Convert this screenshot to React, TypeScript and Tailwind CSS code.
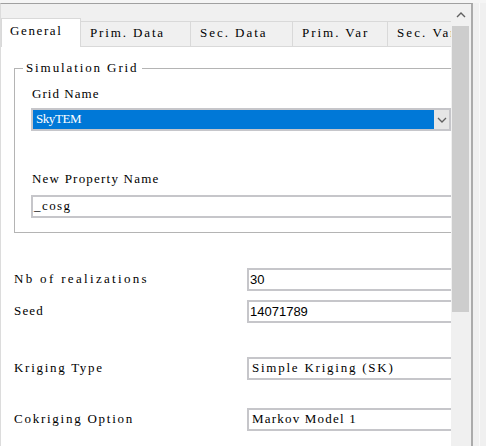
import React from "react";

let ctx: CanvasRenderingContext2D | null = null;
function spacingFor(text: string, size: number): number {
  if (typeof document === "undefined") return 0;
  if (!ctx) ctx = document.createElement("canvas").getContext("2d");
  if (!ctx) return 0;
  ctx.font = `${size}px "Liberation Serif"`;
  const w = ctx.measureText(text).width;
  return (7.5 * text.length - w) / text.length;
}

function M({ children, white }: { children: string; white?: boolean }) {
  const s = spacingFor(children, 13);
  return (
    <span
      className={`relative -top-px font-[Liberation_Serif,Times_New_Roman,serif] text-[13px] leading-[15px] whitespace-pre ${white ? "text-white" : "text-black"}`}
      style={{ letterSpacing: `${s}px` }}
    >
      {children}
    </span>
  );
}

function Tab({ label, w, selected }: { label: string; w: string; selected?: boolean }) {
  if (selected) {
    return (
      <div className={`${w} h-[29px] -mb-px bg-white border-t border-l border-r border-[#d9d9d9] flex items-center pl-[8px] pb-[4px] z-10 shrink-0`}>
        <M>{label}</M>
      </div>
    );
  }
  return (
    <div className={`${w} h-[25px] bg-[#f0f0f0] border-t border-r border-[#d9d9d9] flex items-center pl-[9px] pb-[2px] shrink-0 whitespace-nowrap`}>
      <M>{label}</M>
    </div>
  );
}

function Row({ label, value, sans, top }: { label: string; value: string; sans?: boolean; top: string }) {
  return (
    <div className={`flex items-center h-[23px] ${top}`}>
      <div className="w-[233px] shrink-0 flex">
        <M>{label}</M>
      </div>
      <div className="w-[230px] h-[23px] shrink-0 border-2 border-[#c6c6ca] bg-white flex items-center">
        {sans ? (
          <span className="pl-[1px] font-[Liberation_Sans,Arial,sans-serif] text-[13px] text-black leading-none">{value}</span>
        ) : (
          <span className="pl-[3px] flex">
            <M>{value}</M>
          </span>
        )}
      </div>
    </div>
  );
}

export default function App() {
  return (
    <div className="w-[486px] h-[446px] bg-[#f0f0f0] flex flex-col overflow-hidden">
      <div className="h-[3px] bg-[#f5f5f5] shrink-0" />
      <div className="flex flex-1 min-h-0">
        <div className="w-[473px] shrink-0 border-t border-t-[#a0a0a0] border-l border-l-[#dcdcdc] border-r-2 border-r-[#ababab] flex">
          {/* content */}
          <div className="w-[450px] shrink-0 flex flex-col overflow-hidden">
            {/* tab header */}
            <div className="h-[43px] shrink-0 bg-[#f0f0f0] border-b border-[#d9d9d9] flex items-end">
              <Tab label="General" w="w-[80px]" selected />
              <Tab label="Prim. Data" w="w-[110px]" />
              <Tab label="Sec. Data" w="w-[102px]" />
              <Tab label="Prim. Var" w="w-[95px]" />
              <Tab label="Sec. Var" w="w-[100px]" />
            </div>
            {/* pane */}
            <div className="flex-1 bg-white pl-[13px] pt-[14px]">
              <fieldset className="w-[450px] border border-[#b4b4b4]">
                <legend className="ml-[8px] px-[3px] text-[13px] leading-[15px]">
                  <M>Simulation Grid</M>
                </legend>
                <div className="pl-[16px] pt-[11px] pb-[14px]">
                  <div className="pl-[1px] flex">
                    <M>Grid Name</M>
                  </div>
                  <div className="mt-[6px] w-[420px] h-[23px] border-2 border-[#c6c6ca] bg-white flex">
                    <div className="w-[401px] h-full bg-[#0078d7] flex items-center pl-[3px]">
                      <M white>SkyTEM</M>
                    </div>
                    <div className="flex-1 bg-[#e6e6e6] flex items-center justify-center">
                      <svg width="10" height="6" viewBox="0 0 10 6">
                        <path d="M1 1 L5 5 L9 1" fill="none" stroke="#606060" strokeWidth="1.3" />
                      </svg>
                    </div>
                  </div>
                  <div className="mt-[41px] pl-[1px] flex">
                    <M>New Property Name</M>
                  </div>
                  <div className="mt-[8px] w-[430px] h-[23px] border-2 border-[#c6c6ca] bg-white flex items-center pl-[1px]">
                    <M>_cosg</M>
                  </div>
                </div>
              </fieldset>
              <Row top="mt-[35px]" label="Nb of realizations" value="30" sans />
              <Row top="mt-[9px]" label="Seed" value="14071789" sans />
              <Row top="mt-[34px]" label="Kriging Type" value="Simple Kriging (SK)" />
              <Row top="mt-[28px]" label="Cokriging Option" value="Markov Model 1" />
            </div>
          </div>
          {/* scrollbar */}
          <div className="w-[20px] shrink-0 bg-[#f0f0f0] flex flex-col">
            <div className="h-[22px] shrink-0 flex items-center justify-center">
              <svg width="10" height="6" viewBox="0 0 10 6">
                <path d="M1 5 L5 1 L9 5" fill="none" stroke="#606060" strokeWidth="1.4" />
              </svg>
            </div>
            <div className="ml-[1px] w-[17px] h-[286px] bg-[#cdcdcd]" />
          </div>
        </div>
        <div className="flex-1 pl-[6px]">
          <div className="w-px h-full bg-[#f9f9f9]" />
        </div>
      </div>
    </div>
  );
}
